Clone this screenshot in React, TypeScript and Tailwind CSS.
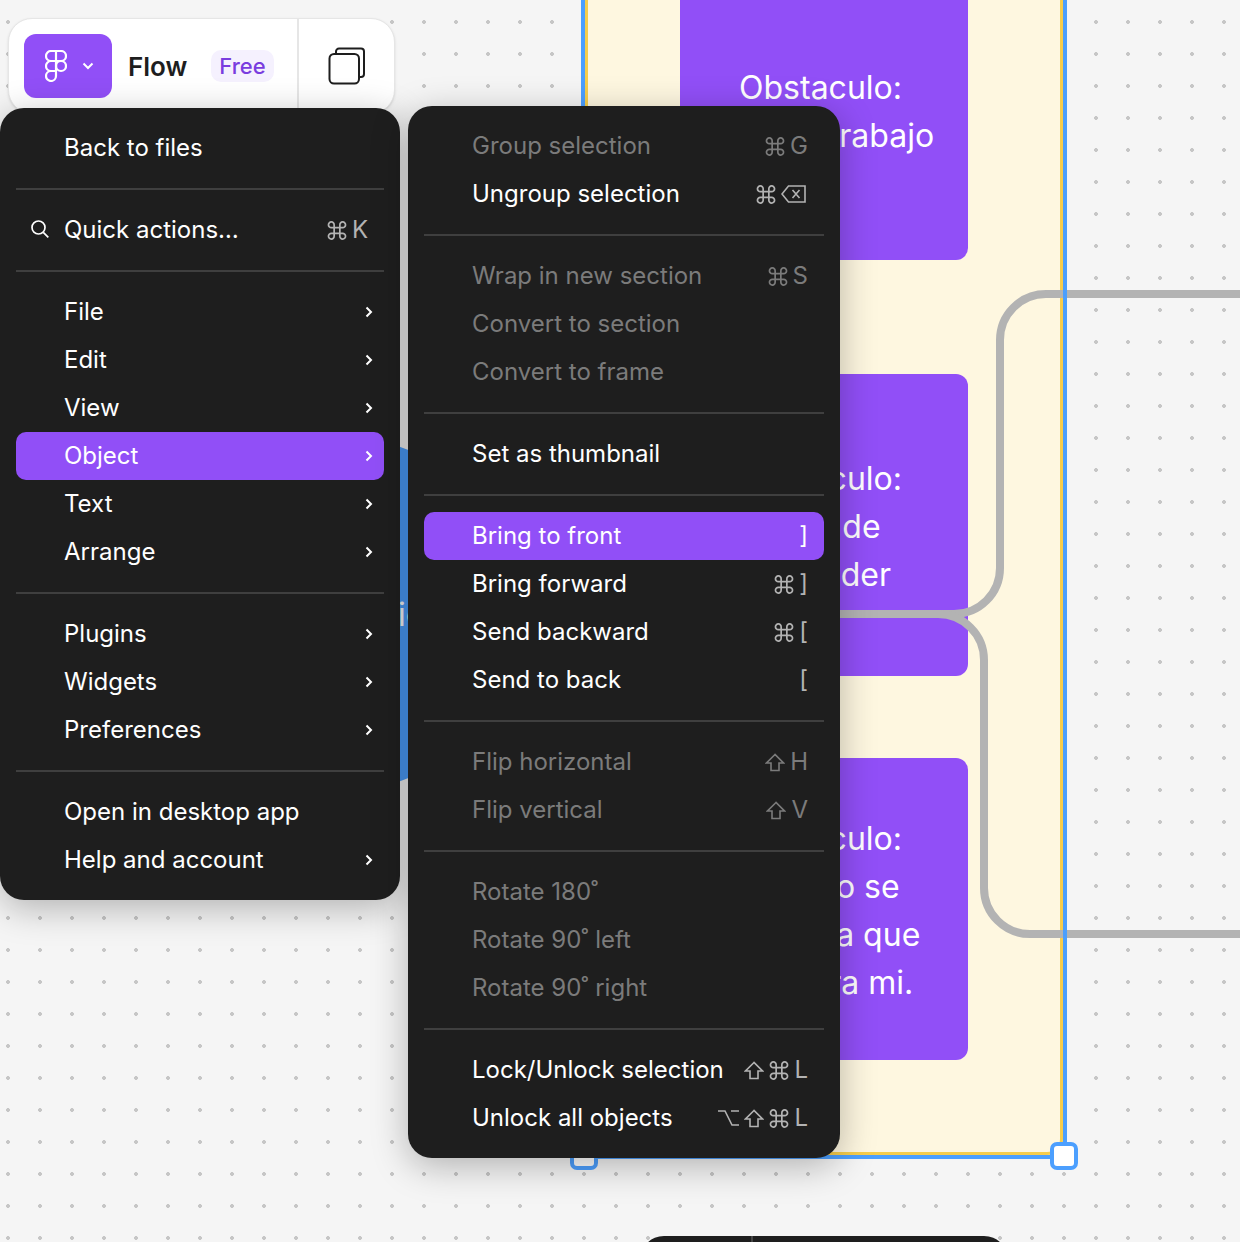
const CmdIcon = () => (
  <svg width="20" height="19" viewBox="0 0 21 20" fill="none" stroke="currentColor" strokeWidth="1.8" className="shrink-0">
    <path d="M7.500 7h6v6h-6zM7.500 7H4.700a3 3 0 1 1 2.800-2.800zM13.500 7V4.200A3 3 0 1 1 16.300 7zM13.500 13h2.800a3 3 0 1 1-2.800 2.800zM7.500 13v2.800A3 3 0 1 1 4.700 13z" />
  </svg>
);

const ShiftIcon = () => (
  <svg width="20" height="19" viewBox="0 0 20 19" fill="none" stroke="currentColor" strokeWidth="1.6" className="shrink-0">
    <path d="M10 1.500 1.500 10H6v7.500h8V10h4.500z" />
  </svg>
);

const OptIcon = () => (
  <svg width="21" height="18" viewBox="0 0 21 18" fill="none" stroke="currentColor" strokeWidth="1.6" className="shrink-0">
    <path d="M0 2h7l7 14h7M13 2h8" />
  </svg>
);

const DelIcon = () => (
  <svg width="25" height="18" viewBox="0 0 25 18" fill="none" stroke="currentColor" strokeWidth="1.6" className="shrink-0 mr-[2px]">
    <path d="M7.500 1H24v16H7.500L1 9zM11.500 5l7 8M18.500 5l-7 8" />
  </svg>
);

const Chevron = () => (
  <svg width="8" height="12" viewBox="0 0 8 12" fill="none" stroke="white" strokeWidth="2" className="shrink-0">
    <path d="M1.500 1.500 6 6l-4.500 4.500" />
  </svg>
);

type Item = {
  label: string;
  keys?: string[];
  arrow?: boolean;
  disabled?: boolean;
  active?: boolean;
};

const Keys = ({ keys }: { keys: string[] }) => (
  <span className="flex items-center gap-[5px]">
    {keys.map((k, i) => {
      if (k === "cmd") return <CmdIcon key={i} />;
      if (k === "shift") return <ShiftIcon key={i} />;
      if (k === "opt") return <OptIcon key={i} />;
      if (k === "del") return <DelIcon key={i} />;
      return <span key={i}>{k}</span>;
    })}
  </span>
);

const Row = ({ item, search }: { item: Item; search?: boolean }) => {
  let bg = "text-white";
  let keyColor = "text-[#b3b3b3]";
  if (item.disabled) {
    bg = "text-[#7b7b7b]";
    keyColor = "text-[#7b7b7b]";
  }
  if (item.active) {
    bg = "bg-[#914ff7] text-white";
    keyColor = "text-white";
  }
  return (
    <div className={`flex items-center h-12 pl-12 pr-4 rounded-[10px] relative ${bg}`}>
      {search && (
        <svg width="20" height="20" viewBox="0 0 20 20" fill="none" stroke="white" strokeWidth="1.7" className="absolute left-[14px] top-[13px]">
          <circle cx="8.500" cy="8.500" r="6.500" />
          <path d="m13.300 13.300 5 5" />
        </svg>
      )}
      <span className="flex-1 whitespace-nowrap">{item.label}</span>
      {item.keys && (
        <span className={keyColor}>
          <Keys keys={item.keys} />
        </span>
      )}
      {item.arrow && (
        <span className="mr-[-5px]">
          <Chevron />
        </span>
      )}
    </div>
  );
};

const Menu = ({ groups, search, className }: { groups: Item[][]; search?: string; className: string }) => (
  <div className={`absolute p-4 bg-[#1e1e1e] text-[24px] leading-[32px] shadow-[0_8px_36px_rgba(0,0,0,0.28)] ${className}`}>
    {groups.map((g, i) => (
      <div key={i}>
        {i > 0 && <div className="h-0.5 bg-[#3f3f3f] my-4" />}
        {g.map((item) => (
          <Row key={item.label} item={item} search={item.label === search} />
        ))}
      </div>
    ))}
  </div>
);

const mainMenu: Item[][] = [
  [{ label: "Back to files" }],
  [{ label: "Quick actions…", keys: ["cmd", "K"] }],
  [
    { label: "File", arrow: true },
    { label: "Edit", arrow: true },
    { label: "View", arrow: true },
    { label: "Object", arrow: true, active: true },
    { label: "Text", arrow: true },
    { label: "Arrange", arrow: true },
  ],
  [
    { label: "Plugins", arrow: true },
    { label: "Widgets", arrow: true },
    { label: "Preferences", arrow: true },
  ],
  [{ label: "Open in desktop app" }, { label: "Help and account", arrow: true }],
];

const objectMenu: Item[][] = [
  [
    { label: "Group selection", keys: ["cmd", "G"], disabled: true },
    { label: "Ungroup selection", keys: ["cmd", "del"] },
  ],
  [
    { label: "Wrap in new section", keys: ["cmd", "S"], disabled: true },
    { label: "Convert to section", disabled: true },
    { label: "Convert to frame", disabled: true },
  ],
  [{ label: "Set as thumbnail" }],
  [
    { label: "Bring to front", keys: ["]"], active: true },
    { label: "Bring forward", keys: ["cmd", "]"] },
    { label: "Send backward", keys: ["cmd", "["] },
    { label: "Send to back", keys: ["["] },
  ],
  [
    { label: "Flip horizontal", keys: ["shift", "H"], disabled: true },
    { label: "Flip vertical", keys: ["shift", "V"], disabled: true },
  ],
  [
    { label: "Rotate 180˚", disabled: true },
    { label: "Rotate 90˚ left", disabled: true },
    { label: "Rotate 90˚ right", disabled: true },
  ],
  [
    { label: "Lock/Unlock selection", keys: ["shift", "cmd", "L"] },
    { label: "Unlock all objects", keys: ["opt", "shift", "cmd", "L"] },
  ],
];

const Card = ({ lines, className }: { lines: string[]; className: string }) => (
  <div className={`absolute left-[680px] w-[288px] pr-[7px] pt-1 flex flex-col items-center justify-center rounded-[12px] bg-[#914ff7] text-white text-[32px] leading-[48px] whitespace-nowrap ${className}`}>
    {lines.map((l) => (
      <div key={l}>{l}</div>
    ))}
  </div>
);

const TopBar = () => (
  <div className="absolute left-2 top-[18px] w-[387px] h-24 flex items-center rounded-[24px] bg-white border border-[#e6e6e6] shadow-sm">
    <div className="ml-[15px] w-[88px] h-16 rounded-[12px] bg-[#914ff7] flex items-center pl-[21px] gap-[15px]">
      <svg width="22" height="32" viewBox="0 0 22 32" fill="none" stroke="white" strokeWidth="2.200">
        <path d="M11 1H6a5 5 0 0 0 0 10h5zM11 1h5a5 5 0 0 1 0 10h-5zM11 11H6a5 5 0 0 0 0 10h5zM6 21h5v5a5 5 0 1 1-5-5z" />
        <circle cx="16" cy="16" r="5" />
      </svg>
      <svg width="12" height="8" viewBox="0 0 12 8" fill="none" stroke="white" strokeWidth="2">
        <path d="m1.500 1.500 4.500 4.500 4.500-4.500" />
      </svg>
    </div>
    <span className="ml-4 text-[26px] font-semibold text-[#1e1e1e]">Flow</span>
    <span className="ml-6 h-8 px-2 flex items-center rounded-[10px] bg-[#f5f1fe] text-[22px] font-medium text-[#7a3ddf]">Free</span>
    <div className="ml-auto w-[97px] h-full border-l-2 border-[#e6e6e6] flex items-center justify-center">
      <svg width="38" height="38" viewBox="0 0 38 38" fill="none" stroke="#1e1e1e" strokeWidth="2">
        <rect x="1.500" y="7" width="29.500" height="29.500" rx="4.500" />
        <path d="M8 7V4.500A3 3 0 0 1 11 1.500h22a3 3 0 0 1 3 3V27a3 3 0 0 1-3 3h-2" />
      </svg>
    </div>
  </div>
);

export default function App() {
  return (
    <div className="relative w-[1240px] h-[1242px] overflow-hidden bg-[#f5f5f5] bg-[radial-gradient(circle,#c6c6c6_1.6px,transparent_2.2px)] bg-[size:32px_32px] bg-[position:-8px_6px] [font-family:Inter,sans-serif]">
      {/* section frame */}
      <div className="absolute left-[585px] top-[-40px] w-[478px] h-[1195px] bg-[#fef7e0] border-[3px] border-[#f7cd4c] rounded-b-[16px]" />

      <Card className="top-[-41px] h-[301px]" lines={["Obstaculo:", "Dias de trabajo"]} />
      <Card className="top-[374px] h-[302px]" lines={["Obstaculo:", "Falta de", "Aprender"]} />
      <Card className="top-[758px] h-[302px]" lines={["Obstaculo:", "Trabajo se", "Ayudar a que", "eso para mi."]} />

      {/* connectors */}
      <svg width="1240" height="1242" fill="none" stroke="#b3b3b3" strokeWidth="8" className="absolute left-0 top-0">
        <path d="M1240 294H1046a46 46 0 0 0-46 46v228a46 46 0 0 1-46 46H700" />
        <path d="M700 614H938a46 46 0 0 1 46 46v228a46 46 0 0 0 46 46h210" />
      </svg>

      {/* selection outline */}
      <div className="absolute left-[581px] top-[-40px] w-[486px] h-[1199px] border-4 border-[#4c9ffe] rounded-b-[4px]" />
      <div className="absolute left-[570px] top-[1142px] w-7 h-7 bg-white border-4 border-[#4c9ffe] rounded-[7px]" />
      <div className="absolute left-[1050px] top-[1142px] w-7 h-7 bg-white border-4 border-[#4c9ffe] rounded-[7px]" />

      {/* ellipse node behind the menus */}
      <div className="absolute left-[165px] top-[437px] w-[354px] h-[354px] rounded-full bg-[#4c9ffe] text-white text-[32px] leading-[48px]">
        <span className="absolute left-[233px] top-[154px]">ic</span>
      </div>

      <div className="absolute left-[640px] top-[1236px] w-[368px] h-[60px] rounded-[24px] bg-[#1e1e1e] pl-[111px]">
        <div className="w-0.5 h-full bg-[#444444]" />
      </div>

      <TopBar />
      <Menu className="left-0 top-[108px] w-[400px] rounded-[24px]" groups={mainMenu} search="Quick actions…" />
      <Menu className="left-[408px] top-[106px] w-[432px] rounded-[24px]" groups={objectMenu} />
    </div>
  );
}
